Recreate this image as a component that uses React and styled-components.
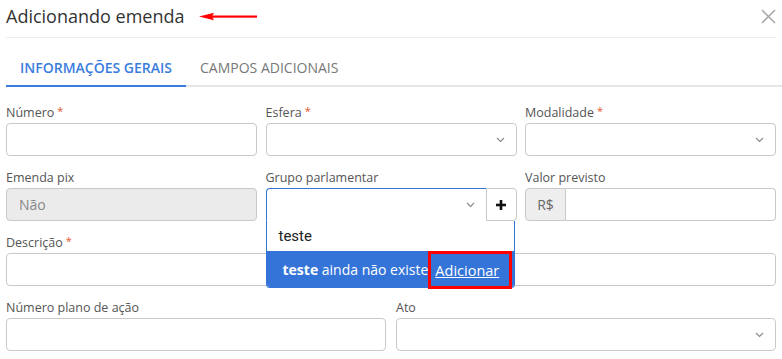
import React from 'react';
import styled, { createGlobalStyle } from 'styled-components';

const GlobalStyle = createGlobalStyle`
  body {
    margin: 0;
    background: #fff;
    font-family: 'Open Sans', sans-serif;
  }
`;

const Modal = styled.div`
  width: 782px;
`;

const Header = styled.div`
  display: flex;
  align-items: center;
  justify-content: space-between;
  box-sizing: border-box;
  height: 38px;
  padding-bottom: 5px;
  margin: 0 6px;
  border-bottom: 1px solid #ececec;
`;

const TitleWrap = styled.div`
  display: flex;
  align-items: center;
  gap: 15px;
`;

const Title = styled.h2`
  margin: 0;
  font-size: 18px;
  font-weight: 400;
  line-height: 26px;
  color: #333;
`;

const CloseButton = styled.div`
  display: flex;
  width: 15px;
  height: 15px;
`;

const Tabs = styled.div`
  display: flex;
  margin-left: 6px;
  border-bottom: 2px solid #e6e6e6;
`;

const Tab = styled.div`
  padding: 21px 14px 8px;
  font-size: 14px;
  line-height: 18px;
  font-weight: ${p => (p.$active ? 600 : 400)};
  color: ${p => (p.$active ? '#3b7ddd' : '#777')};
  border-bottom: 2px solid ${p => (p.$active ? '#3b7ddd' : 'transparent')};
  margin-bottom: -2px;
`;

const Form = styled.div`
  padding: 18px 6px 0;
`;

const Row = styled.div`
  display: grid;
  grid-template-columns: repeat(${p => p.$cols}, 1fr);
  column-gap: ${p => p.$gap || 8}px;
  margin-bottom: 14px;
`;

const Field = styled.div`
  display: flex;
  flex-direction: column;
  position: relative;
`;

const Label = styled.label`
  font-size: 12.5px;
  line-height: 16px;
  color: #555;
  margin-bottom: 2px;
`;

const Star = styled.span`
  color: #e4572e;
  font-size: 11px;
  vertical-align: top;
  margin-left: 3px;
  line-height: 11px;
`;

const Input = styled.div`
  box-sizing: border-box;
  height: 33px;
  display: flex;
  align-items: center;
  justify-content: ${p => (p.$select ? 'flex-end' : 'flex-start')};
  padding: 0 11px 0 12px;
  border: 1px solid #c9c9c9;
  border-radius: 4px;
  background: ${p => (p.$disabled ? '#ebebeb' : '#fff')};
  font-size: 14px;
  color: #888;
`;

const InputGroup = styled.div`
  display: flex;
  height: 33px;
`;

const Addon = styled.div`
  box-sizing: border-box;
  width: 41px;
  display: flex;
  align-items: center;
  justify-content: center;
  background: #eee;
  border: 1px solid #c9c9c9;
  border-radius: 4px 0 0 4px;
  font-size: 14px;
  color: #666;
`;

const GroupInput = styled.div`
  flex: 1;
  box-sizing: border-box;
  border: 1px solid #c9c9c9;
  border-left: none;
  border-radius: 0 4px 4px 0;
`;

const SelectWrap = styled.div`
  position: relative;
  display: flex;
  height: 33px;
`;

const OpenSelect = styled.div`
  flex: 1;
  box-sizing: border-box;
  display: flex;
  align-items: center;
  justify-content: flex-end;
  padding-right: 11px;
  border: 1px solid #3474d8;
  border-bottom-color: transparent;
  border-right: none;
  border-radius: 4px 0 0 0;
  background: #fff;
`;

const AddButton = styled.div`
  box-sizing: border-box;
  width: 31px;
  display: flex;
  align-items: center;
  justify-content: center;
  border: 1px solid #c9c9c9;
  border-radius: 0 4px 4px 0;
  background: #fff;
`;

const Menu = styled.div`
  position: absolute;
  top: 100%;
  left: 0;
  right: 2px;
  z-index: 2;
  box-sizing: border-box;
  background: #fff;
  border: 1px solid #3474d8;
  border-top: none;
  border-radius: 0 0 4px 4px;
`;

const SearchRow = styled.div`
  height: 30px;
  display: flex;
  align-items: center;
  padding-left: 12px;
  font-family: Roboto, sans-serif;
  font-size: 15px;
  color: #222;
`;

const OptionRow = styled.div`
  height: 36px;
  display: flex;
  align-items: center;
  padding-left: 16px;
  background: #3474d8;
  color: #fff;
  font-size: 14px;
  white-space: pre;
  border-radius: 0 0 3px 3px;
`;

const Bold = styled.b`
  font-weight: 700;
`;

const AddLink = styled.span`
  align-self: flex-start;
  box-sizing: border-box;
  height: 38px;
  display: flex;
  align-items: center;
  padding: 0 10px 0 4px;
  border: 3px solid #f00;
  text-decoration: underline;
  font-size: 14.5px;
`;

const Chevron = () => (
  <svg width="9" height="6" viewBox="0 0 9 6">
    <path d="M1 1l3.5 3.5L8 1" fill="none" stroke="#888" strokeWidth="1.1" />
  </svg>
);

const Arrow = () => (
  <svg width="59" height="9" viewBox="0 0 59 9">
    <rect x="12" y="3.5" width="46" height="2.2" fill="#f00" />
    <path d="M0 4.5L15 0.8L13 4.5L15 8.2Z" fill="#f00" />
  </svg>
);

const Plus = () => (
  <svg width="10" height="10" viewBox="0 0 10 10">
    <rect x="3.7" y="0" width="2.6" height="10" fill="#111" />
    <rect x="0" y="3.7" width="10" height="2.6" fill="#111" />
  </svg>
);

function App() {
  return (
    <Modal>
      <GlobalStyle />
      <Header>
        <TitleWrap>
          <Title>Adicionando emenda</Title>
          <Arrow />
        </TitleWrap>
        <CloseButton>
          <svg width="15" height="15" viewBox="0 0 15 15">
            <path d="M1 1L14 14M14 1L1 14" stroke="#aaa" strokeWidth="1.6" />
          </svg>
        </CloseButton>
      </Header>

      <Tabs>
        <Tab $active>INFORMAÇÕES GERAIS</Tab>
        <Tab>CAMPOS ADICIONAIS</Tab>
      </Tabs>

      <Form>
        <Row $cols={3} $gap={8.5}>
          <Field>
            <Label>Número<Star>*</Star></Label>
            <Input />
          </Field>
          <Field>
            <Label>Esfera<Star>*</Star></Label>
            <Input $select><Chevron /></Input>
          </Field>
          <Field>
            <Label>Modalidade<Star>*</Star></Label>
            <Input $select><Chevron /></Input>
          </Field>
        </Row>

        <Row $cols={3} $gap={8.5}>
          <Field>
            <Label>Emenda pix</Label>
            <Input $disabled>Não</Input>
          </Field>
          <Field>
            <Label>Grupo parlamentar</Label>
            <SelectWrap>
              <OpenSelect><Chevron /></OpenSelect>
              <AddButton><Plus /></AddButton>
              <Menu>
                <SearchRow>teste</SearchRow>
                <OptionRow>
                  <Bold>teste</Bold>
                  <span> ainda não existe</span>
                  <AddLink>Adicionar</AddLink>
                </OptionRow>
              </Menu>
            </SelectWrap>
          </Field>
          <Field>
            <Label>Valor previsto</Label>
            <InputGroup>
              <Addon>R$</Addon>
              <GroupInput />
            </InputGroup>
          </Field>
        </Row>

        <Row $cols={1}>
          <Field>
            <Label>Descrição<Star>*</Star></Label>
            <Input />
          </Field>
        </Row>

        <Row $cols={2} $gap={10}>
          <Field>
            <Label>Número plano de ação</Label>
            <Input />
          </Field>
          <Field>
            <Label>Ato</Label>
            <Input $select><Chevron /></Input>
          </Field>
        </Row>
      </Form>
    </Modal>
  );
}

export default App;
